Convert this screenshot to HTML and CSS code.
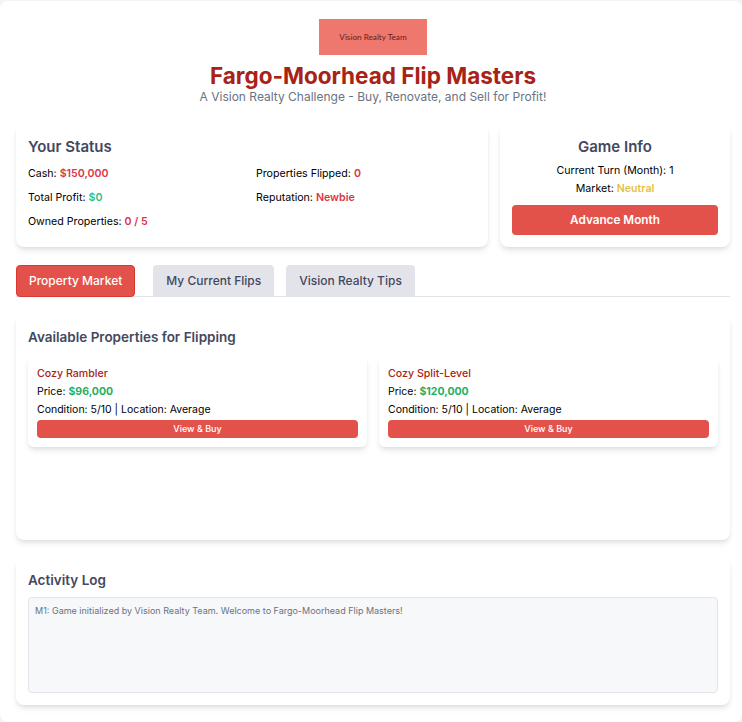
FILE: index.html
```html
<!DOCTYPE html>
<html>
<head>
    <title>Fargo-Moorhead Flip Masters</title>
    <link rel="stylesheet" href="styles.css">
</head>
<body>
    <div class="container">
        <header class="header">
            <div class="logo">Vision Realty Team</div>
            <h1>Fargo-Moorhead Flip Masters</h1>
            <p class="tagline">A Vision Realty Challenge - Buy, Renovate, and Sell for Profit!</p>
        </header>

        <div class="top-row">
            <section class="card status-card">
                <h2>Your Status</h2>
                <div class="status-grid">
                    <div>Cash: <span class="val-red">$150,000</span></div>
                    <div>Properties Flipped: <span class="val-red">0</span></div>
                    <div>Total Profit: <span class="val-green">$0</span></div>
                    <div>Reputation: <span class="val-red">Newbie</span></div>
                    <div>Owned Properties: <span class="val-red">0 / 5</span></div>
                </div>
            </section>
            <section class="card info-card">
                <h2>Game Info</h2>
                <div class="info-line">Current Turn (Month): <span class="val-plain">1</span></div>
                <div class="info-line">Market: <span class="val-yellow">Neutral</span></div>
                <button class="btn btn-advance">Advance Month</button>
            </section>
        </div>

        <nav class="tabs">
            <button class="tab active">Property Market</button>
            <button class="tab">My Current Flips</button>
            <button class="tab">Vision Realty Tips</button>
        </nav>

        <section class="card market-card">
            <h3>Available Properties for Flipping</h3>
            <div class="property-grid">
                <div class="property">
                    <h4>Cozy Rambler</h4>
                    <p>Price: <span class="price">$96,000</span></p>
                    <p>Condition: 5/10 | Location: Average</p>
                    <button class="btn btn-buy">View &amp; Buy</button>
                </div>
                <div class="property">
                    <h4>Cozy Split-Level</h4>
                    <p>Price: <span class="price">$120,000</span></p>
                    <p>Condition: 5/10 | Location: Average</p>
                    <button class="btn btn-buy">View &amp; Buy</button>
                </div>
            </div>
        </section>

        <section class="card log-card">
            <h3>Activity Log</h3>
            <div class="log">M1: Game initialized by Vision Realty Team. Welcome to Fargo-Moorhead Flip Masters!</div>
        </section>
    </div>
</body>
</html>
```
FILE: styles.css
```css
:root {
    --red: #e3524a;
    --value-red: #dc3545;
    --dark-red: #a82315;
    --heading: #434860;
    --green: #27ae60;
    --border: #e2e4ea;
}

* {
    box-sizing: border-box;
}

body {
    font-family: Inter, 'Noto Sans', sans-serif;
    background-color: #f3f4f6;
    color: #000000;
    margin: 0;
    padding-top: 1px;
}

.container {
    background: #ffffff;
    border-radius: 8px;
    padding: 18px 12px 16px 16px;
    min-height: 721px;
}

.header {
    text-align: center;
    margin-bottom: 19px;
}

.logo {
    width: 108px;
    height: 36px;
    margin: 0 auto 7px;
    background: #ee786e;
    color: #6b1a14;
    font-family: Lato, sans-serif;
    font-size: 8.2px;
    display: flex;
    align-items: center;
    justify-content: center;
}

h1 {
    color: var(--dark-red);
    font-size: 22.5px;
    line-height: 27px;
    font-weight: 700;
    margin: 0;
}

.tagline {
    color: #6b7280;
    font-size: 12px;
    line-height: 16px;
    margin: 0;
}

.card {
    background: #ffffff;
    border-radius: 8px;
    box-shadow: 0 4px 6px -1px rgba(0,0,0,0.1), 0 2px 4px -1px rgba(0,0,0,0.06);
    padding: 13px 12px 12px;
}

.top-row {
    display: flex;
    gap: 12px;
    margin-bottom: 18px;
}

.status-card {
    width: 472px;
    height: 123px;
}

.info-card {
    flex: 1;
    text-align: center;
}

h2 {
    color: var(--heading);
    font-size: 15px;
    line-height: 20px;
    font-weight: 600;
    margin: 0 0 9px;
}

.info-card h2 {
    margin-bottom: 6px;
}

.status-grid {
    display: grid;
    grid-template-columns: 1fr 1fr;
    gap: 8px;
    font-size: 10.64px;
    line-height: 16px;
}

.val-red {
    color: var(--value-red);
    font-weight: 600;
}

.val-green {
    color: #2fbf85;
    font-weight: 600;
}

.val-yellow {
    color: #e6c13f;
    font-weight: 600;
}

.info-line {
    font-size: 10.64px;
    line-height: 16px;
    margin-bottom: 2px;
}

.btn {
    display: block;
    width: 100%;
    background: var(--red);
    color: #ffffff;
    border: none;
    font-family: inherit;
    cursor: pointer;
}

.btn-advance {
    height: 30px;
    margin-top: 8px;
    border-radius: 4px;
    font-size: 11.76px;
    font-weight: 600;
}

.tabs {
    display: flex;
    gap: 12px;
    border-bottom: 1px solid var(--border);
    margin-bottom: 18px;
}

.tab {
    height: 32px;
    padding: 0 13px 2px;
    margin-bottom: -1px;
    border: none;
    border-radius: 4px 4px 0 0;
    background: var(--border);
    color: var(--heading);
    font-family: inherit;
    font-size: 12px;
    font-weight: 500;
}

.tab.active {
    background: var(--red);
    color: #ffffff;
    border: 1px solid #d9392e;
    border-radius: 4px;
    padding: 0 12px 2px;
    margin-right: 6px;
}

.market-card {
    height: 225px;
    margin-bottom: 18px;
}

h3 {
    color: var(--heading);
    font-size: 13.5px;
    line-height: 18px;
    font-weight: 600;
    margin: 0 0 8px;
}

.market-card h3 {
    margin-bottom: 11px;
}

.property-grid {
    display: grid;
    grid-template-columns: 1fr 1fr;
    gap: 12px;
}

.property {
    border-radius: 6px;
    box-shadow: 0 4px 6px -1px rgba(0,0,0,0.1), 0 2px 4px -1px rgba(0,0,0,0.06);
    padding: 8px 9px 9px;
    font-size: 10.5px;
    line-height: 18px;
}

.property h4 {
    color: var(--dark-red);
    font-size: 10.64px;
    line-height: 18px;
    font-weight: 500;
    margin: 0;
}

.property p {
    margin: 0;
}

.price {
    color: var(--green);
    font-weight: 700;
}

.btn-buy {
    height: 18px;
    margin-top: 1px;
    padding: 0 0 2px;
    border-radius: 4px;
    font-size: 9px;
    font-weight: 500;
}

.log-card {
    height: 147px;
}

.log {
    height: 96px;
    padding: 6px;
    background: #f7f8fa;
    border: 1px solid var(--border);
    border-radius: 4px;
    color: #6b7280;
    font-size: 9px;
    line-height: 14px;
}
```
